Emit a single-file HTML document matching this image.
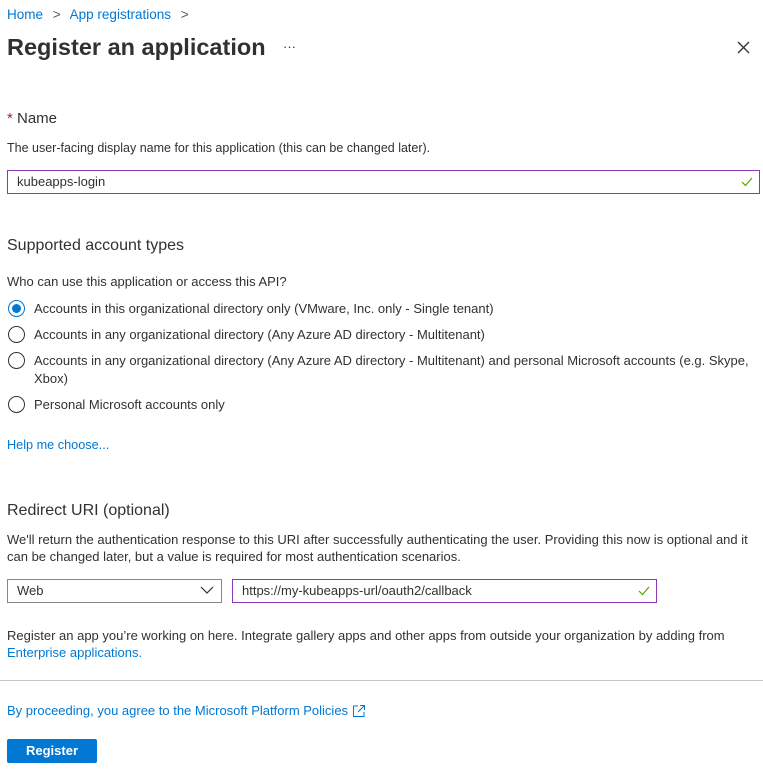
<!DOCTYPE html>
<html><head><meta charset="utf-8"><style>
body{margin:0;width:763px;height:773px;background:#fff;font-family:"Segoe UI","Liberation Sans",sans-serif;color:#323130;font-size:13px;position:relative;overflow:hidden}
.a{position:absolute;white-space:nowrap;line-height:17px}
.l{color:#0078d4}
.box{position:absolute;box-sizing:border-box;height:24px;line-height:22px;padding-left:9px;font-size:13px}
.r{position:absolute;left:8px;width:17px;height:17px;box-sizing:border-box;border:1px solid #323130;border-radius:50%}
</style></head><body>
<div class="a l" style="left:7px;top:6px;font-size:13.5px">Home <span style="color:#605e5c;margin:0 6px">&gt;</span> App registrations <span style="color:#605e5c;margin-left:6px">&gt;</span></div>
<div class="a" style="left:7px;top:33px;font-size:23.5px;line-height:28px;font-weight:600">Register an application</div>
<div class="a" style="left:283px;top:38px">···</div>
<svg class="a" style="left:737px;top:41px" width="13" height="13"><path d="M1 1L12 12M12 1L1 12" stroke="#323130" stroke-width="1.3"/></svg>
<div class="a" style="left:7px;top:110px;font-size:15px"><span style="color:#a4262c">*</span> Name</div>
<div class="a" style="left:7px;top:140px;font-size:12.5px">The user-facing display name for this application (this can be changed later).</div>
<div class="box" style="left:7px;top:170px;width:753px;border:1px solid #8a3ab9">kubeapps-login</div>
<svg class="a" style="left:741px;top:177px" width="12" height="10"><path d="M1 5L4.5 8.5L11 1" stroke="#57a300" fill="none" stroke-width="1.2"/></svg>
<div class="a" style="left:7px;top:236px;font-size:16px;line-height:20px">Supported account types</div>
<div class="a" style="left:7px;top:273px">Who can use this application or access this API?</div>
<div class="r" style="top:300px;border-color:#0078d4"><div style="position:absolute;left:3px;top:3px;width:9px;height:9px;border-radius:50%;background:#0078d4"></div></div>
<div class="a" style="left:34px;top:300px">Accounts in this organizational directory only (VMware, Inc. only - Single tenant)</div>
<div class="r" style="top:326px"></div>
<div class="a" style="left:34px;top:326px">Accounts in any organizational directory (Any Azure AD directory - Multitenant)</div>
<div class="r" style="top:352px"></div>
<div class="a" style="left:34px;top:352px">Accounts in any organizational directory (Any Azure AD directory - Multitenant) and personal Microsoft accounts (e.g. Skype,</div>
<div class="a" style="left:34px;top:370px">Xbox)</div>
<div class="r" style="top:396px"></div>
<div class="a" style="left:34px;top:396px">Personal Microsoft accounts only</div>
<div class="a l" style="left:7px;top:437px;font-size:12.7px">Help me choose...</div>
<div class="a" style="left:7px;top:501px;font-size:16px;line-height:20px">Redirect URI (optional)</div>
<div class="a" style="left:7px;top:531px">We'll return the authentication response to this URI after successfully authenticating the user. Providing this now is optional and it</div>
<div class="a" style="left:7px;top:548px">can be changed later, but a value is required for most authentication scenarios.</div>
<div class="box" style="left:7px;top:579px;width:215px;border:1px solid #8a8886">Web</div>
<svg class="a" style="left:200px;top:586px" width="14" height="9"><path d="M1 1L7 7L13 1" stroke="#323130" fill="none" stroke-width="1.2"/></svg>
<div class="box" style="left:232px;top:579px;width:425px;border:1px solid #8a3ab9">https://my-kubeapps-url/oauth2/callback</div>
<svg class="a" style="left:638px;top:586px" width="12" height="10"><path d="M1 5L4.5 8.5L11 1" stroke="#57a300" fill="none" stroke-width="1.2"/></svg>
<div class="a" style="left:7px;top:627px">Register an app you’re working on here. Integrate gallery apps and other apps from outside your organization by adding from</div>
<div class="a l" style="left:7px;top:644px">Enterprise applications.</div>
<div style="position:absolute;left:0;top:680px;width:763px;height:1px;background:#c8c6c4"></div>
<div class="a l" style="left:7px;top:702px">By proceeding, you agree to the Microsoft Platform Policies</div>
<svg class="a" style="left:352px;top:704px" width="14" height="14"><path d="M6 2H1.5V12.5H12V8M8 1.5H12.5V6M12.5 1.5L6 8" stroke="#0078d4" fill="none"/></svg>
<div style="position:absolute;left:7px;top:739px;width:90px;height:24px;background:#0078d4;border-radius:2px;color:#fff;text-align:center;line-height:23px;font-weight:600">Register</div>
</body></html>
